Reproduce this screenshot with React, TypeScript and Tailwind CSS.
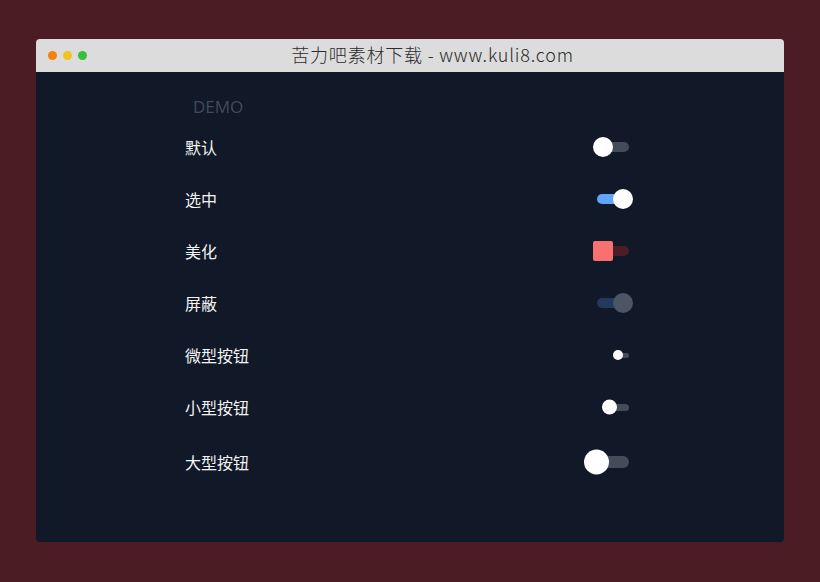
import React, { useState } from 'react'

type Variant = 'default' | 'pretty' | 'disabled'
type Size = 'mini' | 'small' | 'normal' | 'large'

interface ToggleProps {
  checked: boolean;
  onChange?: (v: boolean) => void;
  variant?: Variant;
  size?: Size;
}

const sizes: Record<Size, { track: string; knob: string; off: string; on: string }> = {
  mini: { track: 'w-[16px] h-[5px]', knob: 'w-[10px] h-[10px]', off: 'left-0', on: 'right-0' },
  small: { track: 'w-[24px] h-[7px]', knob: 'w-[15px] h-[15px]', off: 'left-[-3px]', on: 'right-[-3px]' },
  normal: { track: 'w-[32px] h-[10px]', knob: 'w-5 h-5', off: 'left-[-4px]', on: 'right-[-4px]' },
  large: { track: 'w-[40px] h-[12px]', knob: 'w-[25px] h-[25px]', off: 'left-[-5px]', on: 'right-[-5px]' },
}

const Toggle: React.FC<ToggleProps> = ({ checked, onChange, variant = 'default', size = 'normal' }) => {
  const s = sizes[size]
  let trackColor = checked ? 'bg-[#60a5fa]' : 'bg-[#444c5a]'
  let knobColor = 'bg-white rounded-full'
  if (variant === 'pretty') {
    trackColor = 'bg-[#4a1d28]'
    knobColor = 'bg-[#f87171] rounded-[2px]'
  }
  if (variant === 'disabled') {
    trackColor = 'bg-[#243a5c]'
    knobColor = 'bg-[#4b5563] rounded-full'
  }
  return (
    <button
      type="button"
      disabled={variant === 'disabled'}
      onClick={() => onChange && onChange(!checked)}
      className={`relative block rounded-full ${s.track} ${trackColor}`}
    >
      <span
        className={`absolute top-1/2 -translate-y-1/2 ${s.knob} ${knobColor} ${checked ? s.on : s.off}`}
      />
    </button>
  )
}

export default function App() {
  const [vals, setVals] = useState<boolean[]>([false, true, false, true, false, false, false])

  const rows: { label: string; variant?: Variant; size?: Size; h: string }[] = [
    { label: '默认', h: 'h-[52px]' },
    { label: '选中', h: 'h-[52px]' },
    { label: '美化', variant: 'pretty', h: 'h-[52px]' },
    { label: '屏蔽', variant: 'disabled', h: 'h-[52px]' },
    { label: '微型按钮', size: 'mini', h: 'h-[52px]' },
    { label: '小型按钮', size: 'small', h: 'h-[52px]' },
    { label: '大型按钮', size: 'large', h: 'h-[58px]' },
  ]

  return (
    <div
      className="min-h-screen bg-[#4b1c23] pt-[39px] px-[36px]"
      style={{ fontFamily: '"Noto Sans", "Noto Sans CJK SC", sans-serif' }}
    >
      <div className="rounded-[4px] overflow-hidden">
        {/* title bar */}
        <div className="h-[33px] bg-[#dcdcdc] flex items-center">
          <div className="flex gap-[6px] pl-[12px]">
            <span className="w-[9px] h-[9px] rounded-full bg-[#fb7f0c]" />
            <span className="w-[9px] h-[9px] rounded-full bg-[#f2c31d]" />
            <span className="w-[9px] h-[9px] rounded-full bg-[#34c13c]" />
          </div>
          <div
            className="flex-1 text-center text-[18px] leading-[24px] -mt-[3px] font-light text-[#2b2b2b] tracking-[0.8px]"
            style={{ fontFamily: '"Noto Sans CJK SC", sans-serif' }}
          >
            苦力吧素材下载 - www.kuli8.com
          </div>
          <div className="w-[6px]" />
        </div>

        {/* content */}
        <div className="h-[470px] bg-[#111827] pt-[24px]">
          <div className="w-[444px] ml-[149px]">
            <div
              className="pl-2 text-[17px] leading-[22px] text-[#434b5a] h-[25px]"
              style={{ fontFamily: '"Open Sans", sans-serif' }}
            >
              DEMO
            </div>
            {rows.map((r, i) => (
              <div key={i} className={`flex items-center justify-between ${r.h}`}>
                <span
                  className="text-[16px] text-[#f3f4f6]"
                  style={{ fontFamily: '"Noto Sans CJK SC", sans-serif' }}
                >
                  {r.label}
                </span>
                <Toggle
                  checked={vals[i]}
                  variant={r.variant}
                  size={r.size}
                  onChange={(v) => setVals(vals.map((x, j) => (j === i ? v : x)))}
                />
              </div>
            ))}
          </div>
        </div>
      </div>
    </div>
  )
}
